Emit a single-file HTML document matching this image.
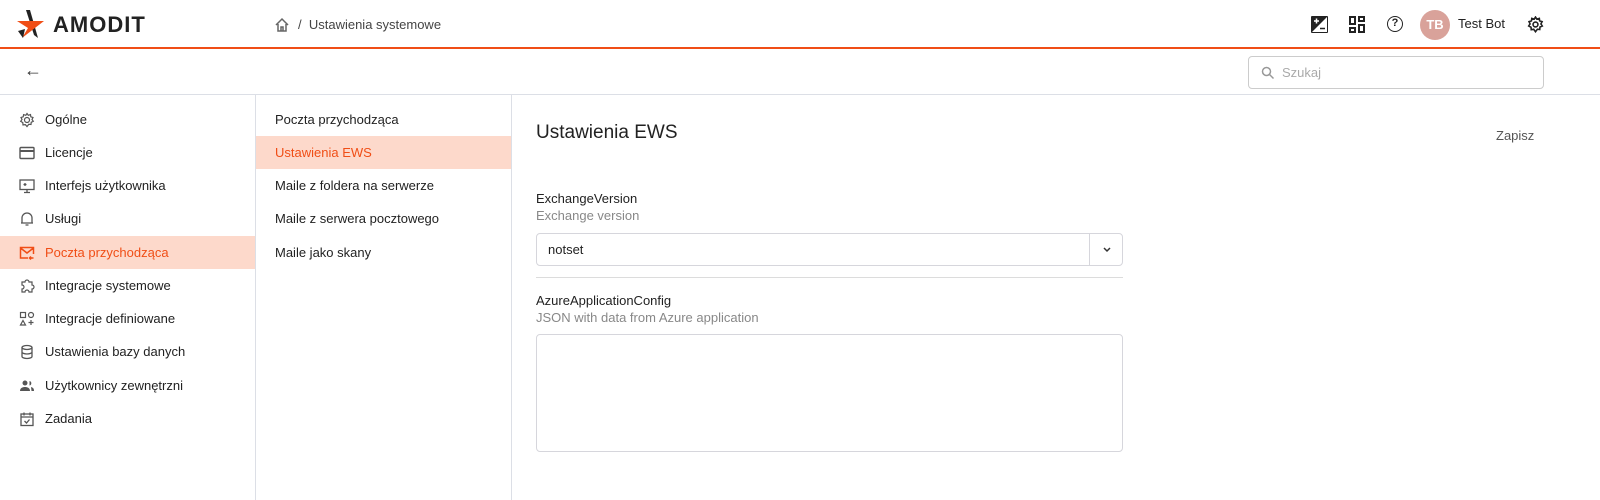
<!DOCTYPE html>
<html><head><meta charset="utf-8"><style>
*{box-sizing:border-box;margin:0;padding:0}
body{width:1600px;height:500px;overflow:hidden;background:#fff;font-family:"Liberation Sans",sans-serif;color:#222;font-size:13px;position:relative}
.hdr{position:absolute;left:0;top:0;width:1600px;height:49px;border-bottom:2px solid #f04e16}
.bar2{position:absolute;left:0;top:49px;width:1600px;height:46px;border-bottom:1px solid #dcdfe6}
.abs{position:absolute}
.nav1{position:absolute;left:0;top:95px;width:256px;height:405px;border-right:1px solid #dcdfe6}
.nav2{position:absolute;left:256px;top:95px;width:256px;height:405px;border-right:1px solid #dcdfe6}
.it{position:absolute;left:0;width:255px;height:33px;display:flex;align-items:center;font-size:13px}
.it svg{position:absolute;left:19px}
.it span{position:absolute;left:45px}
.sel{background:#fdd9cb;color:#f04e16}
.it2 span{left:19px}
</style></head><body>
<div class="hdr">
 <svg class="abs" style="left:16px;top:9px" width="30" height="32" viewBox="0 0 30 32"><path d="M10 1 L14 1 L22 29 L18 26 Z" fill="#222"/><path d="M1 12 L28 12 L6 29 L12 19 Z" fill="#f04e16"/><path d="M2 22 L9 20 L7 29 Z" fill="#222"/></svg>
 <div class="abs" style="left:53px;top:12px;font-size:22px;font-weight:bold;letter-spacing:1px;color:#222">AMODIT</div>
 <svg class="abs" style="left:274px;top:17px" width="16" height="16" viewBox="0 0 16 16" fill="none" stroke="#666" stroke-width="1.5"><path d="M2 8 L8 2 L14 8 M4 7 V14 H12 V7 M7 14 V10 H9 V14"/></svg>
 <div class="abs" style="left:298px;top:17px;font-size:13px;color:#444">/&nbsp; Ustawienia systemowe</div>
 <svg class="abs" style="left:1311px;top:16px" width="17" height="17" viewBox="0 0 17 17"><rect x="0" y="0" width="17" height="17" rx="1" fill="#222"/><path d="M16 1 L1 16 H16Z" fill="#fff"/><path d="M3 5h5M5.5 2.5v5" stroke="#fff" stroke-width="1.5"/><path d="M9 12.5h5" stroke="#222" stroke-width="1.5"/></svg>
 <svg class="abs" style="left:1349px;top:16px" width="16" height="17" viewBox="0 0 16 17" fill="none" stroke="#222" stroke-width="2"><rect x="1" y="1" width="5" height="7"/><rect x="10" y="1" width="5" height="4"/><rect x="1" y="12" width="5" height="4"/><rect x="10" y="9" width="5" height="7"/></svg>
 <div class="abs" style="left:1387px;top:16px;width:16px;height:16px;border:1.6px solid #222;border-radius:50%;font-size:11px;font-weight:bold;text-align:center;line-height:13px">?</div>
 <div class="abs" style="left:1420px;top:10px;width:30px;height:30px;border-radius:50%;background:#d9a29a;color:#fff;font-size:13px;font-weight:bold;text-align:center;line-height:30px">TB</div>
 <div class="abs" style="left:1458px;top:16px;font-size:13px;color:#222">Test Bot</div>
 <svg class="abs" style="left:1527px;top:16px" width="17" height="17" viewBox="0 0 16 16" fill="none" stroke="#222" stroke-width="1.5"><circle cx="8" cy="8" r="2.3"/><path d="M8 1 L9.3 3 L11.6 2.3 L11.9 4.6 L14.2 5.3 L13.1 7.5 L14.4 9.4 L12.2 10.4 L12 12.7 L9.8 12.4 L8 14.8 L6.3 12.5 L4 12.9 L3.8 10.6 L1.6 9.4 L2.9 7.5 L1.9 5.3 L4.2 4.6 L4.5 2.3 L6.8 3 Z"/></svg>
</div>
<div class="bar2">
 <div class="abs" style="left:24px;top:11px;font-size:18px;color:#333">←</div>
 <div class="abs" style="left:1248px;top:7px;width:296px;height:33px;border:1px solid #ccc;border-radius:4px">
  <svg class="abs" style="left:12px;top:9px" width="14" height="14" viewBox="0 0 14 14" fill="none" stroke="#999" stroke-width="1.5"><circle cx="5.5" cy="5.5" r="4"/><path d="M8.5 8.5 L12.5 12.5"/></svg>
  <div class="abs" style="left:33px;top:8px;color:#aaa;font-size:13px">Szukaj</div>
 </div>
</div>
<div class="nav1">
 <div class="it" style="top:8px"><svg width="16" height="16" viewBox="0 0 16 16" fill="none" stroke="#555" stroke-width="1.2"><circle cx="8" cy="8" r="2.5"/><path d="M8 1.5 L9.3 3.3 L11.5 2.6 L11.8 4.8 L14 5.5 L13 7.5 L14.3 9.3 L12.2 10.3 L12 12.5 L9.8 12.3 L8 14.5 L6.4 12.6 L4 12.9 L3.8 10.6 L1.7 9.3 L3 7.5 L2 5.5 L4.2 4.8 L4.6 2.6 L6.8 3.3 Z"/></svg><span>Ogólne</span></div>
 <div class="it" style="top:41px"><svg width="16" height="14" viewBox="0 0 16 14" fill="none" stroke="#555" stroke-width="1.4"><rect x="1" y="1.5" width="14" height="11" rx="1"/><path d="M1 5h14" stroke-width="2"/></svg><span>Licencje</span></div>
 <div class="it" style="top:74px"><svg width="16" height="16" viewBox="0 0 16 16" fill="none" stroke="#555" stroke-width="1.3"><rect x="1" y="2" width="14" height="9.5"/><path d="M8 11.5v3M5 14.5h6M6 5v3M4.5 6.5h3"/></svg><span>Interfejs użytkownika</span></div>
 <div class="it" style="top:107px"><svg width="16" height="16" viewBox="0 0 16 16" fill="none" stroke="#555" stroke-width="1.3"><path d="M3 12 V7 A5 5 0 0 1 13 7 V12 Z M2 12h12 M6.5 14h3"/></svg><span>Usługi</span></div>
 <div class="it sel" style="top:141px"><svg width="16" height="16" viewBox="0 0 16 16" fill="none" stroke="#f04e16" stroke-width="1.5"><path d="M9 13H1.5V2.5h13V9 M1.5 3 L8 8 L14.5 3 M10.5 13h4 M12 11.5l-1.5 1.5 1.5 1.5"/></svg><span>Poczta przychodząca</span></div>
 <div class="it" style="top:174px"><svg width="16" height="16" viewBox="0 0 16 16" fill="none" stroke="#555" stroke-width="1.2"><path d="M3 4h3a2 2 0 0 1 4 0h3v3a2 2 0 0 1 0 4v3h-3a2 2 0 0 0-4 0H3v-3a2 2 0 0 0 0-4z"/></svg><span>Integracje systemowe</span></div>
 <div class="it" style="top:207px"><svg width="16" height="16" viewBox="0 0 16 16" fill="none" stroke="#555" stroke-width="1.2"><rect x="1.5" y="1.5" width="5" height="5"/><circle cx="12" cy="4" r="2.5"/><path d="M4 9.5 L6.5 14 H1.5Z M12 9v5M9.5 11.5h5"/></svg><span>Integracje definiowane</span></div>
 <div class="it" style="top:240px"><svg width="16" height="16" viewBox="0 0 16 16" fill="none" stroke="#555" stroke-width="1.3"><ellipse cx="8" cy="3.5" rx="5" ry="2"/><path d="M3 3.5v9c0 1.1 2.2 2 5 2s5-.9 5-2v-9M3 8c0 1.1 2.2 2 5 2s5-.9 5-2"/></svg><span>Ustawienia bazy danych</span></div>
 <div class="it" style="top:274px"><svg width="16" height="16" viewBox="0 0 16 16" fill="#555"><circle cx="6" cy="5" r="2.5"/><path d="M1 13c0-3 2.5-4 5-4s5 1 5 4z"/><path d="M10.5 3a2.3 2.3 0 0 1 0 4.5zM12 9c2 .5 3 1.5 3 4h-2.5z"/></svg><span>Użytkownicy zewnętrzni</span></div>
 <div class="it" style="top:307px"><svg width="16" height="16" viewBox="0 0 16 16" fill="none" stroke="#555" stroke-width="1.3"><rect x="2" y="3" width="12" height="11.5"/><path d="M2 6h12M5 1.5v3M11 1.5v3M5.5 10l2 2 3-3.5"/></svg><span>Zadania</span></div>
</div>
<div class="nav2">
 <div class="it it2" style="top:8px"><span>Poczta przychodząca</span></div>
 <div class="it it2 sel" style="top:41px"><span>Ustawienia EWS</span></div>
 <div class="it it2" style="top:74px"><span>Maile z foldera na serwerze</span></div>
 <div class="it it2" style="top:107px"><span>Maile z serwera pocztowego</span></div>
 <div class="it it2" style="top:141px"><span>Maile jako skany</span></div>
</div>
<div class="abs" style="left:536px;top:122px;font-size:19px;color:#222">Ustawienia EWS</div>
<div class="abs" style="left:1496px;top:128px;font-size:13px;color:#555">Zapisz</div>
<div class="abs" style="left:536px;top:191px;font-size:13px">ExchangeVersion</div>
<div class="abs" style="left:536px;top:208px;font-size:13px;color:#888">Exchange version</div>
<div class="abs" style="left:536px;top:233px;width:587px;height:33px;border:1px solid #d6d6dc;border-radius:4px">
 <div class="abs" style="left:11px;top:8px;font-size:13px">notset</div>
 <div class="abs" style="left:552px;top:0;width:1px;height:31px;background:#d6d6dc"></div>
 <svg class="abs" style="left:565px;top:12px" width="10" height="8" viewBox="0 0 10 8" fill="none" stroke="#333" stroke-width="1.5"><path d="M2 2l3 3 3-3"/></svg>
</div>
<div class="abs" style="left:536px;top:277px;width:587px;height:1px;background:#dcdcdc"></div>
<div class="abs" style="left:536px;top:293px;font-size:13px">AzureApplicationConfig</div>
<div class="abs" style="left:536px;top:310px;font-size:13px;color:#888">JSON with data from Azure application</div>
<div class="abs" style="left:536px;top:334px;width:587px;height:118px;border:1px solid #d6d6dc;border-radius:4px"></div>
</body></html>
